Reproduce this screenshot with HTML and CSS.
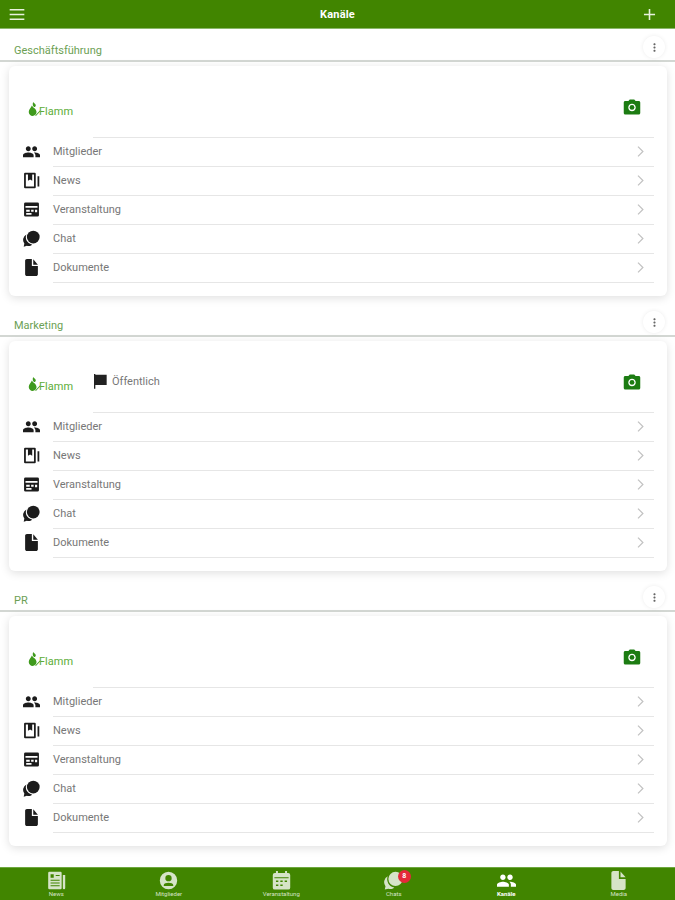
FILE: index.html
```html
<!DOCTYPE html>
<html lang="de">

<head>
  <meta charset="UTF-8">
  <title>Kanäle</title>
  <link rel="stylesheet" href="styles.css">
</head>

<body>
  <!-- icon set, used through <use> below -->
  <svg class="icon-defs" xmlns="http://www.w3.org/2000/svg">
    <symbol id="i-menu" viewBox="0 0 16 12"><path d="M0 0h16v1.6H0zM0 5.2h16v1.6H0zM0 10.4h16V12H0z"/></symbol>
    <symbol id="i-add" viewBox="0 0 24 24"><path d="M19 13h-6v6h-2v-6H5v-2h6V5h2v6h6v2z"/></symbol>
    <symbol id="i-more" viewBox="0 0 24 24"><path d="M12 8c1.1 0 2-.9 2-2s-.9-2-2-2-2 .9-2 2 .9 2 2 2zm0 2c-1.1 0-2 .9-2 2s.9 2 2 2 2-.9 2-2-.9-2-2-2zm0 6c-1.1 0-2 .9-2 2s.9 2 2 2 2-.9 2-2-.9-2-2-2z"/></symbol>
    <symbol id="i-camera" viewBox="0 0 24 24"><circle cx="12" cy="12.500" r="3.200"/><path d="M9 2L7.170 4H3C1.900 4 1 4.900 1 6v14c0 1.100.9 2 2 2h18c1.100 0 2-.9 2-2V6c0-1.100-.9-2-2-2h-4.170L15 2H9zm3 15.500c-2.760 0-5-2.240-5-5s2.240-5 5-5 5 2.240 5 5-2.240 5-5 5z"/></symbol>
    <symbol id="i-people" viewBox="0 0 24 24"><path d="M16.500 11.500c1.900 0 3.400-1.500 3.400-3.500s-1.500-3.500-3.400-3.500c-1.900 0-3.500 1.500-3.500 3.500s1.600 3.500 3.500 3.500zm-9 0c1.900 0 3.400-1.500 3.400-3.500S9.400 4.500 7.500 4.500C5.600 4.500 4 6 4 8s1.600 3.500 3.500 3.500zm0 2C4.900 13.500 0 14.700 0 17.200V20h15v-2.800c0-2.500-4.900-3.700-7.500-3.700zm9 0c-.3 0-.7 0-1.100.1 1.300.9 2.100 2.100 2.100 3.600V20H24v-2.800c0-2.500-4.900-3.700-7.500-3.700z"/></symbol>
    <symbol id="i-news" viewBox="0 0 24 24"><path fill-rule="evenodd" d="M3 1h13.500A1.500 1.500 0 0 1 18 2.500v19a1.500 1.500 0 0 1-1.500 1.500H3a1.500 1.500 0 0 1-1.500-1.500v-19A1.500 1.500 0 0 1 3 1zM4 3.500v17h11.500v-17H13v9l-3-2-3 2v-9z"/><path d="M20.500 6h2.500v14.500h-2.500z"/></symbol>
    <symbol id="i-paper" viewBox="0 0 24 24"><path fill-rule="evenodd" d="M3 1h14a1.500 1.500 0 0 1 1.500 1.500v19A1.500 1.500 0 0 1 17 23H3a1.500 1.500 0 0 1-1.500-1.500v-19A1.500 1.500 0 0 1 3 1zM4.500 4v4.500h4V4zM11 5v1.200h5V5zM4.500 11v1.200h11.500V11zM4.500 14.500v1.200h11.500v-1.200zM4.500 18v1.200h11.500V18z"/><path d="M20 5h3v16.500a1.500 1.500 0 0 1-3 0z"/></symbol>
    <symbol id="i-event" viewBox="0 0 24 24"><path fill-rule="evenodd" d="M3.500 2H20.500A2 2 0 0 1 22.500 4V20A2 2 0 0 1 20.500 22H3.500A2 2 0 0 1 1.500 20V4A2 2 0 0 1 3.500 2zM3.500 7V9.500H20.500V7zM4.500 12.500V15H9.500V12.500zM11.500 12.500V15H15V12.500zM4.500 17V19.500H12V17zM17 12.500V16H20V12.500z"/></symbol>
    <symbol id="i-calendar" viewBox="0 0 24 24"><path fill-rule="evenodd" d="M5 0h2.500v2.500h9V0H19v2.500h1.500A2.500 2.500 0 0 1 23 5v16a2.500 2.500 0 0 1-2.500 2.500h-17A2.500 2.500 0 0 1 1 21V5a2.500 2.500 0 0 1 2.500-2.500H5zM3 8v1h18V8zM5 12v2h3v-2zM10.500 12v2h3v-2zM16 12v2h3v-2zM5 17v2h3v-2zM10.500 17v2h3v-2z"/></symbol>
    <symbol id="i-chat" viewBox="0 0 24 24"><circle cx="14.500" cy="10" r="9"/><path d="M4.800 6.500A10.500 10.500 0 0 0 13 20.800c-2 1.900-5 2.400-7.500 1.500L1 23.500l.9-4.300A8.500 8.500 0 0 1 4.800 6.500z"/></symbol>
    <symbol id="i-file" viewBox="0 0 24 24"><path d="M12.500 0H5.500C4.200 0 3 1.100 3 2.500v19C3 22.900 4.200 24 5.500 24h13c1.300 0 2.500-1.100 2.500-2.500V10h-8.500z"/><path d="M14.500 .5V8H21z"/></symbol>
    <symbol id="i-chevron" viewBox="0 0 24 24"><path d="M8.700 3.500L7.300 4.900 14.400 12l-7.100 7.100 1.400 1.400L17.200 12z"/></symbol>
    <symbol id="i-flag" viewBox="0 0 24 24"><path d="M3 1.500h2v1h17v15.500H5v5.500H3z"/></symbol>
    <symbol id="i-leaf" viewBox="0 0 14 16"><path d="M5.500 0c.6 1.300 2.900 1.900 2.900 3.600 0 1-.8 1.700-1.800 1.600C5.300 5 4.600 2.500 5.500 0z"/><path d="M4.200 3.800c1 2.400 5 3.500 5 7 0 2.400-2 4.200-4.200 4.200S.8 13.100.8 10.700C.8 7.800 3 6.600 4.200 3.800z"/><path d="M8.500 15l5-5.500-.7-.5L7.800 14.400z"/></symbol>
    <symbol id="i-account" viewBox="0 0 24 24"><path fill-rule="evenodd" d="M12 1a11 11 0 1 1 0 22 11 11 0 0 1 0-22zm0 4a4 4 0 1 0 0 8 4 4 0 0 0 0-8zm0 9.800c-2.700 0-6 1.100-6 2.800V19h12v-1.400c0-1.700-3.300-2.800-6-2.800z"/></symbol>
  </svg>

  <header class="topbar">
    <svg class="topbar-menu"><use href="#i-menu"/></svg>
    <h1>Kanäle</h1>
    <svg class="topbar-add"><use href="#i-add"/></svg>
  </header>

  <main>
    <section class="channel">
      <div class="channel-head">
        <span class="channel-name">Geschäftsführung</span>
        <span class="more"><svg><use href="#i-more"/></svg></span>
      </div>
      <div class="card">
        <div class="card-top">
          <div class="logo"><svg><use href="#i-leaf"/></svg><span>Flamm</span></div>
          <div class="visibility"></div>
          <svg class="camera"><use href="#i-camera"/></svg>
        </div>
        <a class="row"><svg class="row-icon"><use href="#i-people"/></svg><span class="row-body">Mitglieder<svg class="chevron"><use href="#i-chevron"/></svg></span></a>
        <a class="row"><svg class="row-icon"><use href="#i-news"/></svg><span class="row-body">News<svg class="chevron"><use href="#i-chevron"/></svg></span></a>
        <a class="row"><svg class="row-icon"><use href="#i-event"/></svg><span class="row-body">Veranstaltung<svg class="chevron"><use href="#i-chevron"/></svg></span></a>
        <a class="row"><svg class="row-icon"><use href="#i-chat"/></svg><span class="row-body">Chat<svg class="chevron"><use href="#i-chevron"/></svg></span></a>
        <a class="row"><svg class="row-icon"><use href="#i-file"/></svg><span class="row-body">Dokumente<svg class="chevron"><use href="#i-chevron"/></svg></span></a>
      </div>
    </section>

    <section class="channel">
      <div class="channel-head">
        <span class="channel-name">Marketing</span>
        <span class="more"><svg><use href="#i-more"/></svg></span>
      </div>
      <div class="card">
        <div class="card-top">
          <div class="logo"><svg><use href="#i-leaf"/></svg><span>Flamm</span></div>
          <div class="visibility"><svg><use href="#i-flag"/></svg><span>Öffentlich</span></div>
          <svg class="camera"><use href="#i-camera"/></svg>
        </div>
        <a class="row"><svg class="row-icon"><use href="#i-people"/></svg><span class="row-body">Mitglieder<svg class="chevron"><use href="#i-chevron"/></svg></span></a>
        <a class="row"><svg class="row-icon"><use href="#i-news"/></svg><span class="row-body">News<svg class="chevron"><use href="#i-chevron"/></svg></span></a>
        <a class="row"><svg class="row-icon"><use href="#i-event"/></svg><span class="row-body">Veranstaltung<svg class="chevron"><use href="#i-chevron"/></svg></span></a>
        <a class="row"><svg class="row-icon"><use href="#i-chat"/></svg><span class="row-body">Chat<svg class="chevron"><use href="#i-chevron"/></svg></span></a>
        <a class="row"><svg class="row-icon"><use href="#i-file"/></svg><span class="row-body">Dokumente<svg class="chevron"><use href="#i-chevron"/></svg></span></a>
      </div>
    </section>

    <section class="channel">
      <div class="channel-head">
        <span class="channel-name">PR</span>
        <span class="more"><svg><use href="#i-more"/></svg></span>
      </div>
      <div class="card">
        <div class="card-top">
          <div class="logo"><svg><use href="#i-leaf"/></svg><span>Flamm</span></div>
          <div class="visibility"></div>
          <svg class="camera"><use href="#i-camera"/></svg>
        </div>
        <a class="row"><svg class="row-icon"><use href="#i-people"/></svg><span class="row-body">Mitglieder<svg class="chevron"><use href="#i-chevron"/></svg></span></a>
        <a class="row"><svg class="row-icon"><use href="#i-news"/></svg><span class="row-body">News<svg class="chevron"><use href="#i-chevron"/></svg></span></a>
        <a class="row"><svg class="row-icon"><use href="#i-event"/></svg><span class="row-body">Veranstaltung<svg class="chevron"><use href="#i-chevron"/></svg></span></a>
        <a class="row"><svg class="row-icon"><use href="#i-chat"/></svg><span class="row-body">Chat<svg class="chevron"><use href="#i-chevron"/></svg></span></a>
        <a class="row"><svg class="row-icon"><use href="#i-file"/></svg><span class="row-body">Dokumente<svg class="chevron"><use href="#i-chevron"/></svg></span></a>
      </div>
    </section>
  </main>

  <nav class="tabbar">
    <a class="tab"><svg><use href="#i-paper"/></svg><span>News</span></a>
    <a class="tab"><svg><use href="#i-account"/></svg><span>Mitglieder</span></a>
    <a class="tab"><svg><use href="#i-calendar"/></svg><span>Veranstaltung</span></a>
    <a class="tab"><svg><use href="#i-chat"/></svg><span>Chats</span><b class="badge">8</b></a>
    <a class="tab active"><svg><use href="#i-people"/></svg><span>Kanäle</span></a>
    <a class="tab"><svg><use href="#i-file"/></svg><span>Media</span></a>
  </nav>
</body>

</html>
```

FILE: styles.css
```css
* {
  box-sizing: border-box;
}

body {
  margin: 0;
  height: 900px;
  display: flex;
  flex-direction: column;
  overflow: hidden;
  background: #fff;
  color: #777;
  font-family: Roboto, "Liberation Sans", sans-serif;
  font-size: 11px;
}

.icon-defs {
  display: none;
}

.topbar {
  height: 29px;
  flex: none;
  display: grid;
  grid-template-columns: 1fr auto 1fr;
  align-items: center;
  padding: 1px 16px 0 16px;
  background: #418500;
  border-bottom: 1px solid #8ab86a;
  color: #fff;
}

.topbar h1 {
  margin: 0;
  font-size: 11px;
  font-weight: 700;
  letter-spacing: 0.2px;
}

.topbar svg {
  fill: #e8f2de;
}

.topbar-menu {
  width: 16px;
  height: 11px;
  margin-left: -7px;
}

.topbar-add {
  width: 19px;
  height: 19px;
  justify-self: end;
}

main {
  flex: 1;
  min-height: 0;
}

.channel {
  height: 275px;
}

.channel-head {
  height: 33px;
  display: flex;
  align-items: flex-end;
  justify-content: space-between;
  padding: 0 10px 0 14px;
  border-bottom: 2px solid #d3d7d3;
}

.channel-name {
  color: #6c9f54;
  font-size: 11px;
  line-height: 14px;
  margin-bottom: 2px;
}

.more {
  width: 22px;
  height: 22px;
  margin-bottom: 2px;
  display: flex;
  align-items: center;
  justify-content: center;
  border-radius: 50%;
  box-shadow: 0 0 4px rgba(0, 0, 0, 0.08);
  background: #fff;
}

.more svg {
  width: 13px;
  height: 13px;
  fill: #666;
}

.card {
  height: 230px;
  margin: 4px 8px 0 9px;
  border-radius: 6px;
  background: #fff;
  box-shadow: 0 2px 10px rgba(0, 0, 0, 0.13);
}

.card-top {
  height: 72px;
  display: flex;
  align-items: center;
  padding: 6px 26px 0 19px;
  position: relative;
}

.card-top::after {
  content: "";
  position: absolute;
  left: 84px;
  right: 13px;
  bottom: 0;
  border-bottom: 1px solid #e6e6e6;
}

.logo {
  width: 64px;
  display: flex;
  align-items: flex-end;
  margin-top: 9px;
  color: #5cad38;
  font-size: 11px;
  line-height: 11px;
}

.logo svg {
  width: 13px;
  height: 15px;
  margin-right: -2px;
  fill: #3f9a1c;
}

.visibility {
  flex: 1;
  display: flex;
  align-items: center;
  gap: 4px;
  margin-top: 2px;
  color: #777;
}

.visibility svg {
  width: 16px;
  height: 16px;
  fill: #222;
}

.camera {
  width: 18px;
  height: 18px;
  fill: #1c7c12;
  margin-top: 3px;
}

.row {
  height: 29px;
  display: flex;
  align-items: center;
  padding-left: 14px;
}

.row-icon {
  width: 17px;
  height: 17px;
  margin-bottom: 2px;
  fill: #1c1c1c;
  flex: none;
}

.row-body {
  flex: 1;
  height: 100%;
  display: flex;
  align-items: center;
  justify-content: space-between;
  margin: 0 13px 0 13px;
  padding: 0 6px 2px 0;
  border-bottom: 1px solid #e6e6e6;
  font-size: 11px;
}

.chevron {
  width: 15px;
  height: 15px;
  fill: #c2c2c2;
}

.tabbar {
  height: 33px;
  flex: none;
  display: grid;
  grid-template-columns: repeat(6, 1fr);
  background: #418500;
  border-top: 1px solid #6ea83f;
}

.tab {
  position: relative;
  display: flex;
  flex-direction: column;
  align-items: center;
  padding-top: 3px;
  color: #d6e4c8;
  font-size: 6px;
  line-height: 8px;
}

.tab svg {
  width: 19px;
  height: 19px;
  fill: #d6e4c8;
}

.tab.active {
  color: #fff;
  font-weight: 700;
}

.tab.active svg {
  fill: #fff;
}

.badge {
  position: absolute;
  top: 2px;
  left: 50%;
  margin-left: 4px;
  width: 13px;
  height: 13px;
  border-radius: 50%;
  background: #e5293a;
  color: #fff;
  font-size: 7px;
  line-height: 13px;
  text-align: center;
}
```
